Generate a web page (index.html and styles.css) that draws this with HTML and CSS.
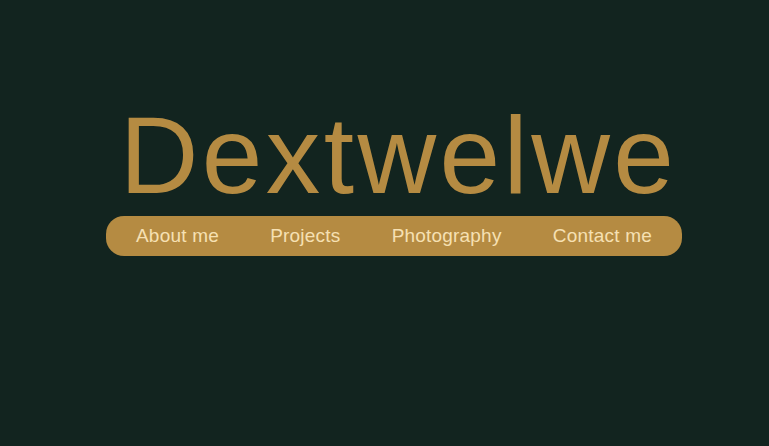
FILE: index.html
```html
<!DOCTYPE html>
<html lang="en">
<head>
<meta charset="utf-8">
<title>Dextwelwe</title>
<link rel="stylesheet" href="styles.css">
</head>
<body>
<header class="hero">
  <h1 class="title">Dextwelwe</h1>
  <nav class="nav">
    <a class="nav-link" href="#">About me</a>
    <a class="nav-link" href="#">Projects</a>
    <a class="nav-link" href="#">Photography</a>
    <a class="nav-link" href="#">Contact me</a>
  </nav>
</header>
</body>
</html>
```
FILE: styles.css
```css
html, body {
  margin: 0;
  padding: 0;
  height: 100%;
}
body {
  background: #12241f;
  font-family: "Liberation Sans", Arial, sans-serif;
}
.hero {
  display: flex;
  flex-direction: column;
  align-items: center;
  padding-top: 101px;
  padding-left: 19px;
}
.title {
  margin: 0 0 0 9px;
  font-size: 109px;
  line-height: 1;
  font-weight: 400;
  letter-spacing: 3.4px;
  color: #b58b42;
}
.nav {
  margin-top: 6px;
  height: 40px;
  width: 576px;
  box-sizing: border-box;
  display: flex;
  align-items: center;
  justify-content: space-between;
  padding: 0 30px;
  background: #b58b42;
  border-radius: 18px;
}
.nav-link {
  color: #f6e0b3;
  text-decoration: none;
  font-size: 19px;
  letter-spacing: 0.2px;
}
```
